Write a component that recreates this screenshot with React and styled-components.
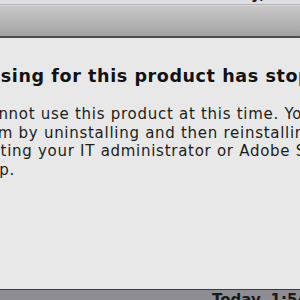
import React from "react";
import styled, { createGlobalStyle } from "styled-components";

const GlobalStyle = createGlobalStyle`
  html, body {
    margin: 0;
    padding: 0;
    background: #e8e8e8;
  }
  body {
    width: 300px;
    height: 300px;
    overflow: hidden;
    font-family: "DejaVu Sans", "Liberation Sans", sans-serif;
  }
`;

const Screen = styled.div`
  display: flex;
  flex-direction: column;
  width: 300px;
  height: 300px;
  overflow: hidden;
`;

const ListStrip = styled.div`
  display: flex;
  justify-content: flex-end;
  align-items: flex-end;
  height: ${(p) => p.$height}px;
  background: ${(p) => p.$bg};
  overflow: hidden;
  border-top: ${(p) => (p.$top ? "1px solid #3c3c3c" : "none")};
`;

const Stamp = styled.span`
  font-size: 15px;
  font-weight: bold;
  color: #1a1a1a;
  white-space: nowrap;
  line-height: 15px;
  margin-right: -39px;
  margin-bottom: ${(p) => p.$offset}px;
`;

const TitleBar = styled.div`
  height: 31px;
  flex-shrink: 0;
  background: linear-gradient(#c9c9c9, #a3a3a3);
  border-top: 1px solid #b4b4b4;
  border-bottom: 2px solid #4e4e4e;
  box-shadow: inset 0 1px 0 #d6d6d6;
`;

const Body = styled.div`
  flex: 1;
  background: #e8e8e8;
  overflow: hidden;
  padding-top: 27px;
`;

const Text = styled.div`
  margin-left: -54px;
  display: flex;
  flex-direction: column;
`;

const Heading = styled.div`
  font-size: 17.5px;
  font-weight: bold;
  letter-spacing: 0.6px;
  color: #111;
  white-space: nowrap;
  line-height: 22px;
  margin-bottom: 18px;
`;

const Line = styled.div`
  font-size: 15px;
  letter-spacing: 0.72px;
  color: #1c1c1c;
  white-space: nowrap;
  line-height: 18.7px;
`;

export default function App() {
  return (
    <Screen>
      <GlobalStyle />
      <ListStrip $height={4} $bg="#dedee4">
        <Stamp $offset={2}>Today, 1:54 PM</Stamp>
      </ListStrip>
      <TitleBar />
      <Body>
        <Text>
          <Heading>Licensing for this product has stopped working.</Heading>
          <Line>You cannot use this product at this time. You must repair the</Line>
          <Line>problem by uninstalling and then reinstalling this product or</Line>
          <Line>contacting your IT administrator or Adobe Support</Line>
          <Line>for help.</Line>
        </Text>
      </Body>
      <ListStrip $height={10} $bg="#8d8d93" $top>
        <Stamp $offset={-8}>Today, 1:54 PM</Stamp>
      </ListStrip>
    </Screen>
  );
}
